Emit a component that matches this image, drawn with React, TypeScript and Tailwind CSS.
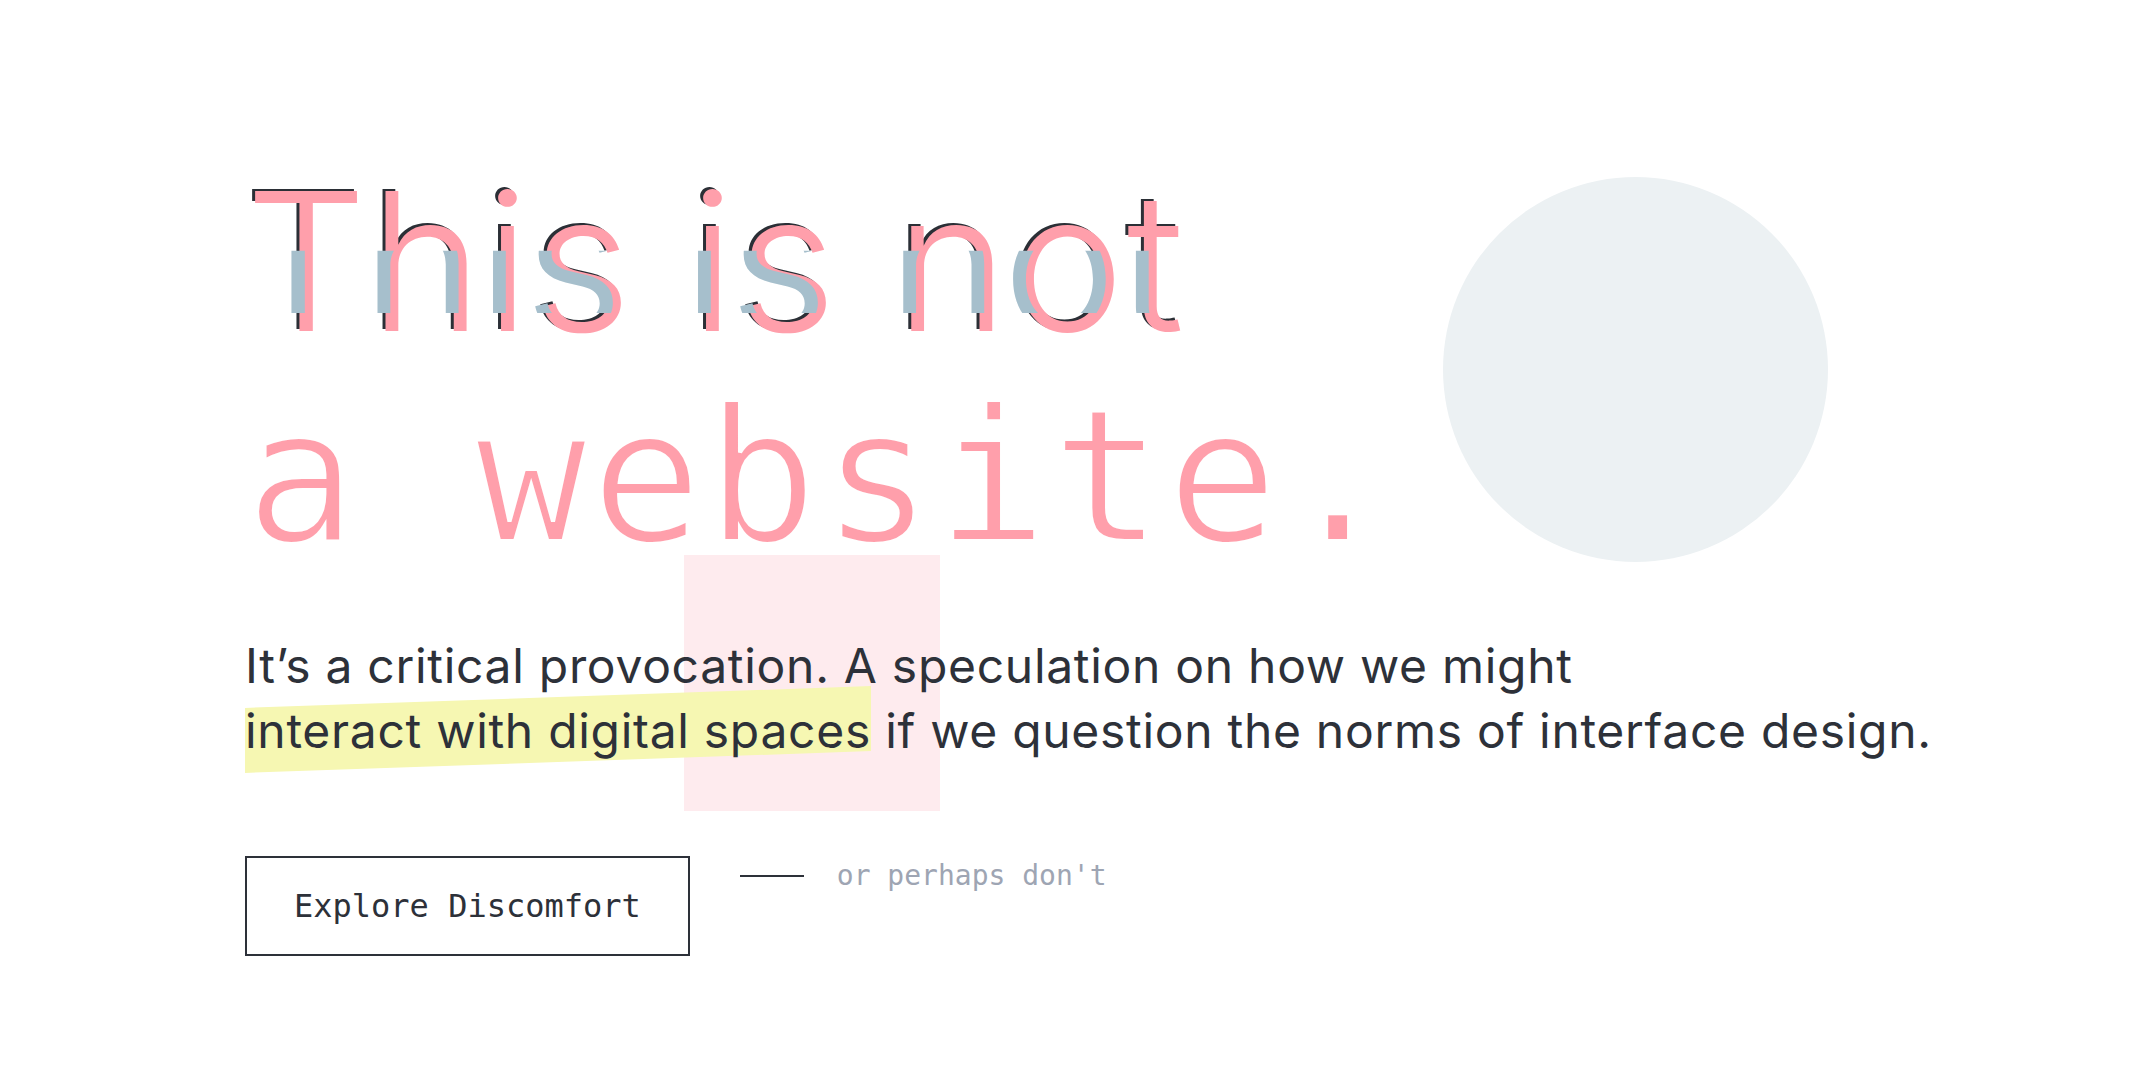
import React from 'react';

const GlitchLine: React.FC<{ text: string }> = ({ text }) => {
  return (
    <span className="relative block whitespace-nowrap font-['Inter',sans-serif] font-light tracking-[2.4px]">
      <span aria-hidden className="absolute left-[-3px] top-[-2px] text-[#2b2f36]">
        {text}
      </span>
      <span className="relative text-[#ff9fab]">{text}</span>
      <span
        aria-hidden
        className="absolute left-[-8px] top-0 text-[#a6bfcc] [clip-path:inset(45%_0_26%_0)]"
      >
        {text}
      </span>
    </span>
  );
};

export default function App() {
  return (
    <div className="relative min-h-screen w-full overflow-hidden bg-white text-[#2d3139]">
      {/* decorative shapes */}
      <div className="absolute left-[1443px] top-[177px] h-[385px] w-[385px] rounded-full bg-[#ecf1f3]" />
      <div className="absolute left-[684px] top-[555px] h-[256px] w-[256px] bg-[#feebee]" />

      <main className="relative pl-[245px] pt-[154px]">
        <h1 className="text-[192px] font-normal leading-[215px]">
          <GlitchLine text="This is not" />
          <span className="block whitespace-nowrap font-['DejaVu_Sans_Mono',monospace] text-[186px] tracking-[3.2px] text-[#ff9fab] [-webkit-text-stroke:4px_white] [paint-order:fill_stroke]">
            a website.
          </span>
        </h1>

        <p className="relative isolate mt-[49px] font-['Inter',sans-serif] text-[48px] leading-[65px] tracking-[0.7px] text-[#2d3139]">
          It’s a critical provocation. A speculation on how we might
          <br />
          <span className="relative">
            <span className="absolute left-0 right-0 top-[-4px] bottom-[-2px] -z-10 -skew-y-2 bg-[#f6f7b2]" />
            interact with digital spaces
          </span>{' '}
          if we question the norms of interface design.
        </p>

        <div className="mt-[93px] flex items-start">
          <button className="border-2 border-[#2d3139] px-[47px] py-6 font-['DejaVu_Sans_Mono',monospace] text-[32px] leading-[48px] text-[#2d3139]">
            Explore Discomfort
          </button>
          <div className="ml-[50px] flex h-[40px] items-center gap-[33px]">
            <div className="h-[2px] w-16 bg-[#2d3139]" />
            <span className="font-['DejaVu_Sans_Mono',monospace] text-[28px] leading-[40px] text-[#9ea5b3]">
              or perhaps don't
            </span>
          </div>
        </div>
      </main>
    </div>
  );
}
